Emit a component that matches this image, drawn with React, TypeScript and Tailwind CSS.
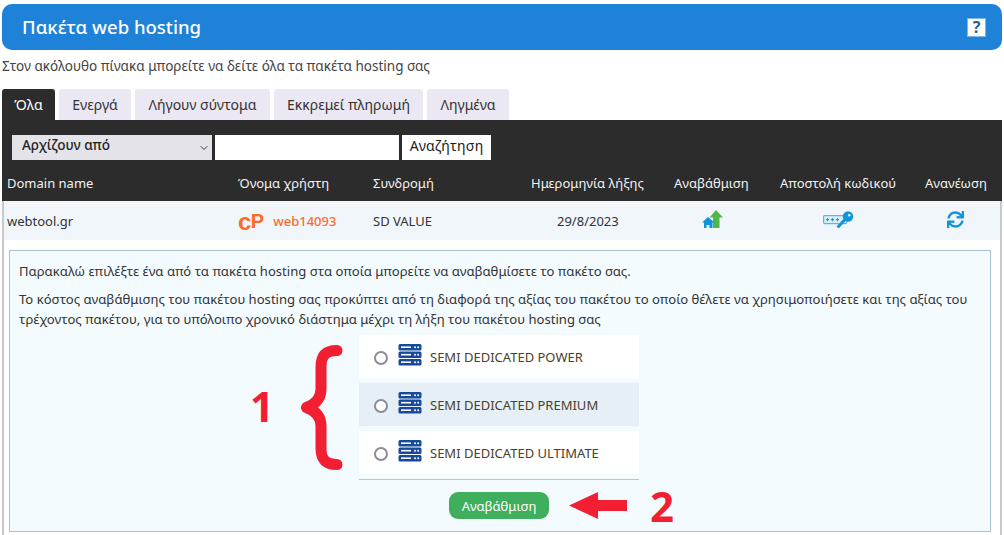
import { ChevronDown } from "lucide-react";
import { FaSync } from "react-icons/fa";

const tabs = [
  { label: "Όλα", width: "w-[53px]", active: true },
  { label: "Ενεργά", width: "w-[72px]" },
  { label: "Λήγουν σύντομα", width: "w-[135px]" },
  { label: "Εκκρεμεί πληρωμή", width: "w-[149px]" },
  { label: "Ληγμένα", width: "w-[82px]" },
];

const plans = [
  { name: "SEMI DEDICATED POWER" },
  { name: "SEMI DEDICATED PREMIUM", hover: true },
  { name: "SEMI DEDICATED ULTIMATE" },
];

const gridCols = "grid grid-cols-[231px_135px_127px_160px_110px_130px_1fr]";

function ServerIcon() {
  return (
    <svg className="h-[22px] w-[24px] shrink-0" viewBox="0 0 24 22">
      {[0, 7.5, 15].map((y) => (
        <g key={y}>
          <rect x="0.5" y={y} width="23" height="6.5" rx="1.5" fill="#174a9c" />
          <rect x="3" y={y + 2.4} width="10" height="1.6" fill="#fff" />
          <circle cx="17" cy={y + 3.2} r="1" fill="#fff" />
          <circle cx="20.2" cy={y + 3.2} r="1" fill="#fff" />
        </g>
      ))}
    </svg>
  );
}

function UpgradeIcon() {
  return (
    <svg className="h-[18px] w-[21px]" viewBox="0 0 21 18">
      <path d="M14 0L21 7.500h-3.500V18h-6.500V7.500H7.500z" fill="#4fb848" />
      <path d="M6 7L12.500 12.500H10.500V18H7.500V15H4.500V18H2V12.500H0z" fill="#0f94d6" />
    </svg>
  );
}

function PasswordKeyIcon() {
  return (
    <svg className="h-[17px] w-[31px]" viewBox="0 0 31 17">
      <rect x="0.6" y="4.6" width="23" height="8" rx="1" fill="#d8effa" stroke="#5cb6e4" strokeWidth="1.2" />
      <path d="M3 8.600h3M4.500 7v3.200M8 8.600h3M9.500 7v3.200M13 8.600h3M14.500 7v3.200" stroke="#3f8fc4" strokeWidth="1.1" />
      <circle cx="25" cy="5.500" r="5.200" fill="#1295d8" />
      <circle cx="26.300" cy="4.200" r="1.300" fill="#f1f6fb" />
      <path d="M22 8.500L15.500 15.500" stroke="#1295d8" strokeWidth="3" strokeLinecap="round" />
    </svg>
  );
}

function Brace() {
  return (
    <svg className="absolute left-[301px] top-[345px] h-[125px] w-[42px]" viewBox="0 0 42 125">
      <path
        d="M36 5.500C25 5.500 20 10 20 22V44C20 53 15 59 5.500 62.500C15 66 20 72 20 81V103C20 115 25 119.500 36 119.500"
        fill="none"
        stroke="#f21f32"
        strokeWidth="11"
        strokeLinecap="round"
        strokeLinejoin="round"
      />
    </svg>
  );
}

function RedArrow() {
  return (
    <svg className="absolute left-[569px] top-[492px] h-[27px] w-[58px]" viewBox="0 0 58 27">
      <path d="M0 13.500L29 0V8H58V19H29V27z" fill="#f21f32" />
    </svg>
  );
}

export default function App() {
  return (
    <div className="relative h-[535px] w-[1004px] overflow-hidden bg-white pl-[2px] pr-[2px] pt-1 font-['Noto_Sans','Open_Sans',sans-serif] text-[#333]">
      {/* Title bar */}
      <div className="flex h-[46px] items-center justify-between rounded-[10px] bg-[#1e82d9] pl-5 pr-[16px]">
        <h1 className="text-[18.5px] font-medium text-white">Πακέτα web hosting</h1>
        <span className="flex h-[19px] w-[19px] items-center justify-center border border-[#7db7ea] bg-white text-[16px] font-bold leading-none text-[#2b5f8f]">
          ?
        </span>
      </div>

      <p className="mt-[6px] h-[33px] text-[13.5px] leading-[20px] text-[#444]">
        Στον ακόλουθο πίνακα μπορείτε να δείτε όλα τα πακέτα hosting σας
      </p>

      {/* Tabs */}
      <div className="flex h-[31px] gap-1">
        {tabs.map((tab) => (
          <div
            key={tab.label}
            className={`flex items-center justify-center rounded-t-[3px] text-[14px] ${tab.width} ${
              tab.active ? "bg-[#2c2c2c] text-white" : "bg-[#ebe8f3] text-[#333]"
            }`}
          >
            {tab.label}
          </div>
        ))}
      </div>

      {/* Filter + table head */}
      <div className="h-[81px] bg-[#2c2c2c] text-white">
        <div className="flex gap-[3px] pl-[10px] pt-[15px]">
          <div className="relative h-[25px] w-[200px] bg-[#e4e3e9]">
            <select className="block h-[20px] w-full appearance-none bg-transparent pl-[10px] text-[13.5px] font-medium leading-[18px] text-[#222] outline-none">
              <option>Αρχίζουν από</option>
            </select>
            <ChevronDown className="pointer-events-none absolute right-[2px] top-[7px] h-3 w-3 text-[#333]" />
          </div>
          <input className="h-[25px] w-[184px] bg-white" />
          <button className="h-[25px] w-[89px] bg-white pb-[4px] text-[14px] tracking-[0.2px] text-[#222]">
            Αναζήτηση
          </button>
        </div>
        <div className={`${gridCols} mt-[14px] whitespace-nowrap pl-[5px] text-[13px] leading-[18px] text-[#f2f2f2]`}>
          <span>Domain name</span>
          <span>Όνομα χρήστη</span>
          <span>Συνδρομή</span>
          <span className="pl-[31px]">Ημερομηνία λήξης</span>
          <span className="pl-[14px]">Αναβάθμιση</span>
          <span className="pl-[10px]">Αποστολή κωδικού</span>
          <span className="pl-[25px]">Ανανέωση</span>
        </div>
      </div>

      {/* Expanded row */}
      <div className="h-[340px] border-x-2 border-[#c8c8c8]">
        <div className={`${gridCols} h-[39px] items-center bg-[#f1f6fb] pl-[3px] pt-[3px] text-[13px] text-[#333]`}>
          <span>webtool.gr</span>
          <span className="flex items-center gap-[9px] text-[#ff6a26]">
            <span className="flex items-baseline font-['Liberation_Sans',sans-serif] font-bold leading-none">
              <span className="text-[24px] tracking-[-0.5px]">c</span>
              <span className="-translate-y-[2px] text-[20px]">P</span>
            </span>
            <span className="font-medium">web14093</span>
          </span>
          <span>SD VALUE</span>
          <span className="pl-[57px]">29/8/2023</span>
          <span className="flex pb-[6px] pl-[42px]">
            <UpgradeIcon />
          </span>
          <span className="flex pb-[6px] pl-[53px]">
            <PasswordKeyIcon />
          </span>
          <span className="flex pb-[6px] pl-[47px]">
            <FaSync className="h-[17px] w-[17px] text-[#1295d8]" />
          </span>
        </div>

        <div className="ml-[5px] mt-[10px] h-[282px] w-[982px] border border-[#a9c2d2] bg-[#f4fbff] px-[9px] pt-[10px] text-[13.1px] leading-[20px] text-[#333]">
          <p>Παρακαλώ επιλέξτε ένα από τα πακέτα hosting στα οποία μπορείτε να αναβαθμίσετε το πακέτο σας.</p>
          <p className="mt-[8px]">
            Το κόστος αναβάθμισης του πακέτου hosting σας προκύπτει από τη διαφορά της αξίας του πακέτου το οποίο θέλετε να χρησιμοποιήσετε και της αξίας του τρέχοντος πακέτου, για το υπόλοιπο χρονικό διάστημα μέχρι τη λήξη του πακέτου hosting σας
          </p>

          <div className="ml-[340px] mt-[6px] w-[280px]">
            <div className="flex flex-col gap-[5px] border-b border-[#bcc4c9] pb-[5px]">
              {plans.map((plan) => (
                <div
                  key={plan.name}
                  className={`flex h-[43px] items-center pl-[15px] text-[13px] text-[#4b4028] ${
                    plan.hover ? "bg-[#e5eff5]" : "bg-white"
                  }`}
                >
                  <span className="mt-[2px] h-[14px] w-[14px] shrink-0 rounded-full border-2 border-[#8b8b9b] bg-white" />
                  <span className="mb-[3px] ml-[10px] flex">
                    <ServerIcon />
                  </span>
                  <span className="ml-[8px]">{plan.name}</span>
                </div>
              ))}
            </div>
            <div className="mt-[12px] flex justify-center">
              <button className="h-[27px] w-[100px] rounded-[9px] bg-[#3fae5d] text-[13px] text-white">
                Αναβάθμιση
              </button>
            </div>
          </div>
        </div>
      </div>

      {/* Red annotations drawn over the screenshot */}
      <Brace />
      <RedArrow />
      <span className="absolute left-[250px] top-[378px] font-['Open_Sans',sans-serif] text-[42px] font-bold leading-[56px] text-[#f21f32]">
        1
      </span>
      <span className="absolute left-[650px] top-[478px] font-['Open_Sans',sans-serif] text-[42px] font-bold leading-[56px] text-[#f21f32]">
        2
      </span>
    </div>
  );
}
